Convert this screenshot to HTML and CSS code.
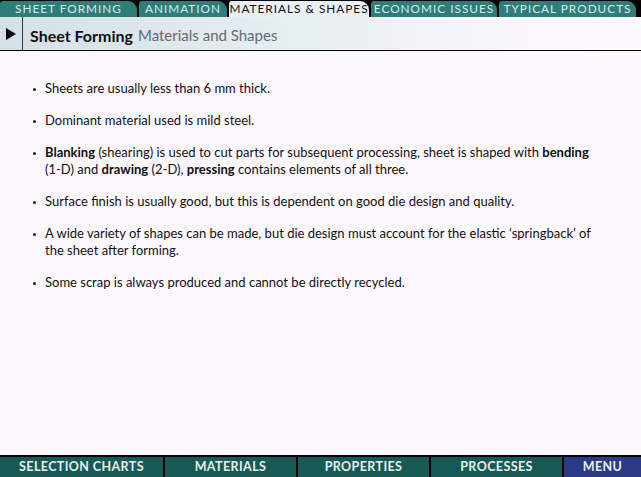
FILE: index.html
```html
<!DOCTYPE html>
<html>
<head>
<meta charset="utf-8">
<link rel="stylesheet" href="styles.css">
</head>
<body>
<div class="app">
  <nav class="tabs">
    <div class="tab" style="width:137px">SHEET FORMING</div>
    <div class="tab" style="width:88px">ANIMATION</div>
    <div class="tab active" style="width:140px">MATERIALS &amp; SHAPES</div>
    <div class="tab" style="width:126px">ECONOMIC ISSUES</div>
    <div class="tab" style="width:137px">TYPICAL PRODUCTS</div>
  </nav>
  <header class="header">
    <div class="play"><svg width="10" height="12" viewBox="0 0 10 12"><polygon points="0,0 10,6 0,12" fill="#000"/></svg></div>
    <div class="title"><b>Sheet Forming</b><span class="sub">Materials and Shapes</span></div>
  </header>
  <main class="content">
    <ul class="list">
      <li><p>Sheets are usually less than 6 mm thick.</p></li>
      <li><p>Dominant material used is mild steel.</p></li>
      <li><p><b>Blanking</b> (shearing) is used to cut parts for subsequent processing, sheet is shaped with <b>bending</b> <span class="nw">(1-D)</span> and <b>drawing</b> <span class="nw">(2-D),</span> <b>pressing</b> contains elements of all three.</p></li>
      <li><p>Surface finish is usually good, but this is dependent on good die design and quality.</p></li>
      <li><p>A wide variety of shapes can be made, but die design must account for the elastic ‘springback’ of the sheet after forming.</p></li>
      <li><p>Some scrap is always produced and cannot be directly recycled.</p></li>
    </ul>
  </main>
  <footer class="footer">
    <div class="btn" style="width:163px">SELECTION CHARTS</div>
    <div class="btn" style="width:131px">MATERIALS</div>
    <div class="btn" style="width:131px">PROPERTIES</div>
    <div class="btn" style="width:131px">PROCESSES</div>
    <div class="btn menu">MENU</div>
  </footer>
</div>
</body>
</html>
```
FILE: styles.css
```css
html, body { margin: 0; padding: 0; }
body { width: 641px; height: 477px; overflow: hidden; font-family: "Lato", "Open Sans", sans-serif; }
.app { display: flex; flex-direction: column; height: 477px; background: #000; }
.tabs { display: flex; gap: 2px; height: 17px; padding-top: 1px; box-sizing: border-box; background: #000; }
.tab { flex: none; background: #2f7d7a; color: #d3ecea; font-size: 11.8px; letter-spacing: 1px; text-align: center; line-height: 16px; border-radius: 3px 9px 0 0; white-space: nowrap; }
.tab.active { background: #e9eff2; color: #111; }
.header { display: flex; height: 33px; background: linear-gradient(90deg, #d3e0e6 0%, #e6eef2 45%, #fbf8fd 85%, #fdf9fd 100%); border-bottom: 1px solid #000; }
.play { width: 22px; flex: none; display: flex; align-items: center; justify-content: center; border-right: 1px solid #333; }
.title { display: flex; align-items: center; gap: 5px; padding: 3px 0 0 7px; color: #111; }
.title b { font-weight: 700; font-size: 16px; }
.sub { color: #6a6a6a; font-size: 15px; }
.content { flex: 1; background: #fdf8fd; }
.list { margin: 0; padding: 29px 34px 0 45px; list-style: none; font-size: 13px; line-height: 17px; color: #111; }
.list li { display: flex; margin-bottom: 15px; }
.list li::before { content: ""; flex: none; width: 3px; height: 3px; border-radius: 50%; background: #222; margin: 8px 0 0 -12px; }
.list p { margin: 0 0 0 9px; }
.nw { white-space: nowrap; }
.footer { display: flex; gap: 2px; height: 20px; margin-top: 2px; background: #000; }
.btn { flex: none; background: #175a55; color: #e6efee; font-weight: 700; font-size: 12.5px; letter-spacing: 0.4px; text-align: center; line-height: 20px; }
.btn.menu { flex: 1; background: #2a3a85; }
```
